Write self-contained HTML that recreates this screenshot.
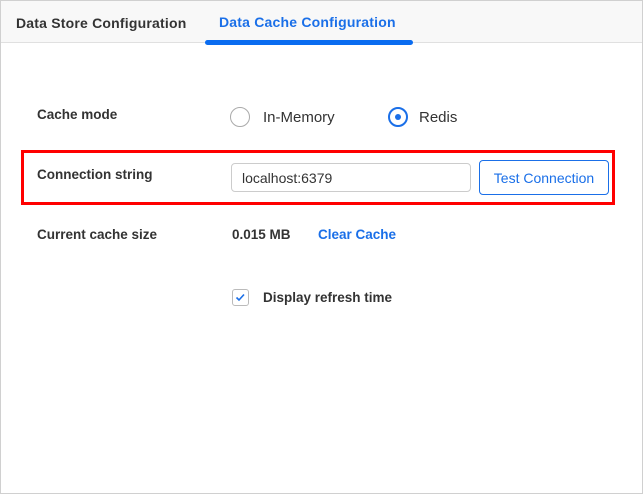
<!DOCTYPE html>
<html><head><style>
body{margin:0;width:643px;height:494px;background:#fff;font-family:"Liberation Sans",sans-serif;position:relative;overflow:hidden}
.frame{position:absolute;left:0;top:0;width:641px;height:492px;border:1px solid #d0d0d0}
.tabs{position:absolute;left:1px;top:1px;width:641px;height:41px;background:#f8f8f8;border-bottom:1px solid #e0e0e0}
.t{position:absolute;font-size:14px;font-weight:bold;top:15px;letter-spacing:.2px}
.ul{position:absolute;left:205px;top:40px;width:208px;height:5px;background:#0a6cf0;border-radius:3px}
.l{position:absolute;left:37px;font-size:13.5px;font-weight:bold;color:#333}
.radio{position:absolute;width:20px;height:20px;border-radius:50%;box-sizing:border-box}
.txt{position:absolute;font-size:15px;color:#333}
</style></head><body>
<div class="frame"></div>
<div class="tabs"></div>
<div class="t" style="left:16px;color:#333">Data Store Configuration</div>
<div class="t" style="left:219px;top:14px;color:#1a6fe8">Data Cache Configuration</div>
<div class="ul"></div>
<div class="l" style="top:107px">Cache mode</div>
<div class="radio" style="left:230px;top:107px;border:1.5px solid #aaa"></div>
<div class="txt" style="left:263px;top:109px">In-Memory</div>
<div class="radio" style="left:388px;top:107px;border:2px solid #1a6fe8"><div style="position:absolute;left:5px;top:5px;width:6px;height:6px;border-radius:50%;background:#1a6fe8"></div></div>
<div class="txt" style="left:419px;top:109px">Redis</div>
<div style="position:absolute;left:21px;top:150px;width:588px;height:49px;border:3px solid #f00"></div>
<div class="l" style="top:167px">Connection string</div>
<div style="position:absolute;left:231px;top:163px;width:238px;height:27px;border:1px solid #ccc;border-radius:4px"></div>
<div class="txt" style="left:242px;top:170px;font-size:14px">localhost:6379</div>
<div style="position:absolute;left:479px;top:160px;width:128px;height:33px;border:1px solid #1a6fe8;border-radius:4px;color:#1a6fe8;font-size:14px;text-align:center;line-height:35px">Test Connection</div>
<div class="l" style="top:227px">Current cache size</div>
<div class="l" style="left:232px;top:227px">0.015 MB</div>
<div class="l" style="left:318px;top:227px;color:#1a6fe8">Clear Cache</div>
<div style="position:absolute;left:232px;top:289px;width:17px;height:17px;border:1px solid #bbb;border-radius:3px;box-sizing:border-box"><svg width="15" height="15" viewBox="0 0 15 15" style="position:absolute;left:0;top:0"><path d="M3.5 7.5l2.5 2.5 5-5.5" fill="none" stroke="#1a6fe8" stroke-width="1.6"/></svg></div>
<div class="l" style="left:263px;top:290px">Display refresh time</div>
</body></html>
